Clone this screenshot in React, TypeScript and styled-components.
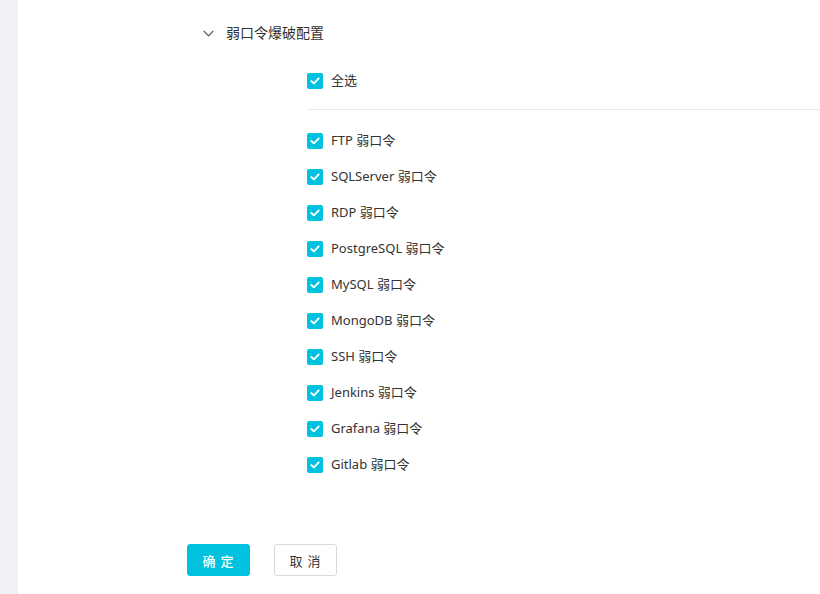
import React from "react";
import styled, { createGlobalStyle } from "styled-components";

const Global = createGlobalStyle`
  html, body { margin: 0; padding: 0; background: #fff; }
  body { font-family: "Noto Sans", "Noto Sans CJK SC", sans-serif; color: #333; }
`;

const Page = styled.div`
  display: flex;
  width: 820px;
  height: 594px;
  overflow: hidden;
`;

const Sidebar = styled.div`
  width: 18px;
  flex: none;
  background: #f0f1f5;
`;

const Main = styled.div`
  flex: 1;
  display: flex;
  flex-direction: column;
`;

const SectionHeader = styled.div`
  margin-top: 21px;
  margin-left: 185px;
  height: 24px;
  display: flex;
  align-items: center;
  gap: 12px;
  font-size: 14px;
  color: #333;
`;

const Chevron = styled.svg`
  width: 11px;
  height: 7px;
  margin-top: 1px;
`;

const Options = styled.div`
  margin-left: 289px;
  margin-top: 18px;
  display: flex;
  flex-direction: column;
`;

const Row = styled.label`
  height: 36px;
  display: flex;
  align-items: center;
  gap: 8px;
  font-size: 13px;
  color: #333;
`;

const Label = styled.span<{ $shift?: number }>`
  line-height: 18px;
  margin-top: ${(p) => p.$shift ?? -2}px;
`;

const Box = styled.span`
  width: 16px;
  height: 16px;
  border-radius: 2px;
  background: #00c1de;
  display: flex;
  align-items: center;
  justify-content: center;
`;

const Divider = styled.div`
  height: 1px;
  background: #e8e8e8;
  margin: 10px 0 13px;
`;

const Actions = styled.div`
  margin-top: 61px;
  margin-left: 169px;
  display: flex;
  gap: 24px;
`;

const Button = styled.button<{ $primary?: boolean }>`
  width: 63px;
  height: 32px;
  border-radius: 3px;
  font-family: "Noto Sans CJK SC", sans-serif;
  font-size: 13px;
  letter-spacing: 1px;
  cursor: pointer;
  border: 1px solid ${(p) => (p.$primary ? "#00c1de" : "#d9d9d9")};
  background: ${(p) => (p.$primary ? "#00c1de" : "#fff")};
  color: ${(p) => (p.$primary ? "#fff" : "#333")};
  font-weight: ${(p) => (p.$primary ? 500 : 400)};
  padding: 0;
`;

const Check = () => (
  <Box>
    <svg width="10" height="8" viewBox="0 0 10 8">
      <path d="M1.3 4 L3.9 6.4 L8.7 1.5" fill="none" stroke="#fff" strokeWidth="1.8" strokeLinecap="round" strokeLinejoin="round" />
    </svg>
  </Box>
);

const items = ["FTP", "SQLServer", "RDP", "PostgreSQL", "MySQL", "MongoDB", "SSH", "Jenkins", "Grafana", "Gitlab"];

export default function App() {
  return (
    <>
      <Global />
      <Page>
        <Sidebar />
        <Main>
          <SectionHeader>
            <Chevron viewBox="0 0 11 7">
              <path d="M0.7 0.8 L5.5 5.8 L10.3 0.8" fill="none" stroke="#555" strokeWidth="1.2" />
            </Chevron>
            <Label $shift={0}>弱口令爆破配置</Label>
          </SectionHeader>
          <Options>
            <Row>
              <Check />
              <Label>全选</Label>
            </Row>
            <Divider />
            {items.map((it) => (
              <Row key={it}>
                <Check />
                <Label>{it} 弱口令</Label>
              </Row>
            ))}
          </Options>
          <Actions>
            <Button $primary>确 定</Button>
            <Button>取 消</Button>
          </Actions>
        </Main>
      </Page>
    </>
  );
}
